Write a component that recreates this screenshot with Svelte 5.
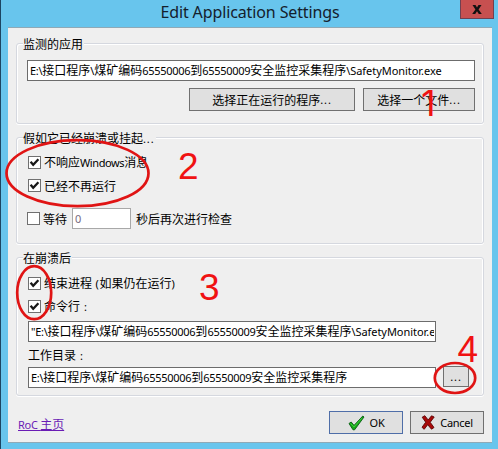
<script>
  const pathHead = [
    { t: 'E:\\', l: 1 }, { t: '接口程序' }, { t: '\\', l: 1 }, { t: '煤矿编码' },
    { t: '65550006', l: 1 }, { t: '到' }, { t: '65550009', l: 1 }, { t: '安全监控采集程序' }
  ];
  const exe = { t: '\\SafetyMonitor.exe', l: 1, wide: 1 };
</script>

{#snippet runs(parts)}{#each parts as p}<span class:l={p.l} class:wide={p.wide}>{p.t}</span>{/each}{/snippet}

{#snippet check(on)}
  <svg class="box" width="13" height="13" viewBox="0 0 13 13">
    <rect x=".5" y=".5" width="12" height="12" fill="#fff" stroke="#707070" />
    {#if on}<path d="M2.6 5.7 5.2 8.8 10.4 3.2" fill="none" stroke="#181818" stroke-width="2.3" />{/if}
  </svg>
{/snippet}

<div class="window">
  <header>
    <h1>Edit Application Settings</h1>
    <button class="close" aria-label="Close">
      <svg width="10" height="9" viewBox="0 0 10 9"><path d="M.5 0h3L5 2.6 6.5 0h3L6.6 4.4 9.8 9h-3L5 6.2 3.2 9h-3l3.2-4.6z" fill="#111" /></svg>
    </button>
  </header>
  <main>
    <section class="group g1">
      <h2>监测的应用</h2>
      <div class="field">{@render runs([...pathHead, exe])}</div>
      <div class="row buttons">
        <button class="pick">选择正在运行的程序<span class="l dots">...</span></button>
        <button class="file">选择一个文件<span class="l dots">...</span></button>
      </div>
    </section>

    <section class="group g2">
      <h2>假如它已经崩溃或挂起<span class="l dots">...</span></h2>
      <div class="row opt">{@render check(true)}<span>不响应<span class="l win">Windows</span>消息</span></div>
      <div class="row opt">{@render check(true)}<span>已经不再运行</span></div>
      <div class="row wait">{@render check(false)}<span>等待</span><div class="num"><span class="l">0</span></div><span>秒后再次进行检查</span></div>
    </section>

    <section class="group g3">
      <h2>在崩溃后</h2>
      <div class="row opt">{@render check(true)}<span>结束进程<span class="l paren">&nbsp;(</span>如果仍在运行<span class="l">)</span></span></div>
      <div class="row opt">{@render check(true)}<span>命令行<span class="l colon">:</span></span></div>
      <div class="field cmd"><div class="clip">{@render runs([{ t: '"', l: 1 }, ...pathHead, exe])}</div></div>
      <div class="label">工作目录<span class="l colon">:</span></div>
      <div class="row dir"><div class="field cmd">{@render runs(pathHead)}</div><button class="more"><span class="l dots">...</span></button></div>
    </section>

    <footer>
      <a href="#home"><span class="l">RoC&nbsp;</span>主页</a>
      <button class="ok">
        <svg width="17" height="16" viewBox="0 0 17 16"><path d="M1 8.5 3.2 7 6 10.4 14.8 1 16 2 6.6 14.8H5z" fill="#16a816" stroke="#075b12" stroke-width=".9" /><path d="M2.5 8.5 6 12 14 3" fill="none" stroke="#3bd13b" stroke-width=".9" /></svg>
        <span class="l">OK</span>
      </button>
      <button class="cancel">
        <svg width="14" height="15" viewBox="0 0 14 15"><path d="M1.2 2.2 3.8.7 7.2 5 10.5.8 13.2 2 9.2 7.3 13 12.5 10.5 14.2 6.7 9.7 3.2 14.3 1 12.3 4.7 7.2z" fill="#a80808" stroke="#5c0505" stroke-width=".9" /></svg>
        <span class="l">Cancel</span>
      </button>
    </footer>
  </main>

  <svg class="marks" width="498" height="449" viewBox="0 0 498 449">
    <g fill="none" stroke="#e01414" stroke-width="2.7">
      <ellipse cx="77.5" cy="173.2" rx="71" ry="33" />
      <ellipse cx="34.2" cy="292.7" rx="17" ry="26.5" />
      <ellipse cx="455" cy="378" rx="20.2" ry="15" />
    </g>
    <g fill="#f01212">
      <text x="421" y="116" class="inter">1</text>
      <text x="178" y="179">2</text>
      <text x="199" y="300">3</text>
      <text x="457.5" y="362">4</text>
    </g>
  </svg>
</div>

<style>
  :global(body) { margin: 0; overflow: hidden; }
  * { box-sizing: border-box; }
  .window {
    position: relative; width: 498px; height: 449px; padding: 0 6px 6px 7px;
    background: #68c5ed; border-left: 1px solid #1c4562;
    font: 12px/14px "Noto Sans CJK SC", sans-serif; color: #000; white-space: nowrap;
  }
  .l { font: 11px/14px "Noto Sans", sans-serif; letter-spacing: -.29px; }
  .wide { letter-spacing: -.05px; }
  .win { letter-spacing: -.4px; }
  .dots { letter-spacing: .9px; }
  .paren { letter-spacing: .6px; }
  header { height: 27px; display: flex; justify-content: center; position: relative; }
  h1 { margin: 0; font: 16px/25px "Noto Sans", sans-serif; color: #14202c; letter-spacing: -.12px; }
  .close { position: absolute; right: -2px; top: -1px; width: 34px; height: 20px; background: #c75050; border: 1px solid #704050; }
  main { height: 416px; background: #efefef; border-top: 1px solid #8fa9b6; border-bottom: 1px solid #8fa9b6; padding: 15px 8px 0; display: flex; flex-direction: column; }
  .group { width: 468px; flex: none; border: 1px solid #d5d8df; border-radius: 3px; box-shadow: inset 1px 1px #fff, inset -1px 0 #fff, 0 1px #fff; padding: 0 8px 0 11px; }
  .g1 { height: 81px; }
  .g2 { height: 107px; margin-top: 13px; }
  .g3 { height: 139px; margin-top: 13px; }
  h2 { font: inherit; margin: -7px 0 0 -5px; padding: 0 1px 0 0; background: #efefef; width: max-content; height: 14px; }
  .row { display: flex; align-items: center; }
  button { padding: 0; display: flex; align-items: center; justify-content: center; font: inherit; color: inherit; background: #e0e0e0; border: 1px solid #707070; white-space: nowrap; }
  .field { height: 21px; border: 1px solid #6c6c6c; background: #fff; line-height: 18px; padding-left: 2px; overflow: hidden; }
  .g1 .field { width: 448px; margin: 9px 0 0 -1px; }
  .buttons { justify-content: flex-end; gap: 8px; margin: 7px 0 0; }
  .pick { width: 166px; height: 23px; }
  .file { width: 112px; height: 23px; }
  .opt { height: 23px; gap: 3px; }
  .g2 h2 + .opt { margin-top: 6px; }
  .g3 h2 + .opt { margin-top: 7px; }
  .box { flex: none; }
  .wait { height: 21px; margin: 11px 0 0 -1px; gap: 3px; }
  .num { width: 59px; height: 21px; border: 1px solid #a8a8a8; background: #fff; color: #776a80; padding: 2px; margin: 0 2px 0 2px; }
  .colon { margin-left: 4px; }
  .cmd { width: 408px; margin: 0; }
  .g3 > .cmd { margin-top: 3px; }
  .clip { width: 403px; overflow: hidden; }
  .label { height: 16px; margin: 6px 0 3px; line-height: 14px; }
  .dir { gap: 7px; }
  .more { width: 26px; height: 21px; margin-top: -2px; }
  footer { display: flex; margin-top: 15px; width: 468px; align-items: center; }
  footer a { color: #6a1cb5; text-decoration: underline; margin: 4px auto 0 2px; }
  .ok, .cancel { width: 74px; height: 23px; gap: 5px; }
  .ok { border-color: #4f6ea8; margin-right: 7px; }
  .marks { position: absolute; left: -1px; top: 0; pointer-events: none; }
  .marks text { font: 37px "Liberation Sans", sans-serif; }
  .marks .inter { font: 36px Inter, sans-serif; }
</style>
